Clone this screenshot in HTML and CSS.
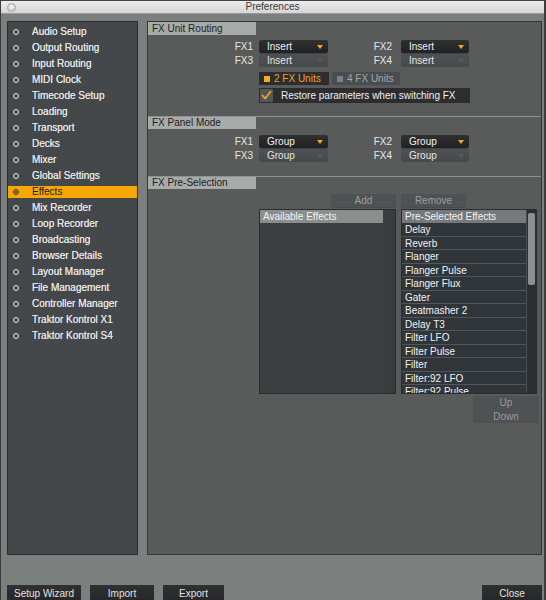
FILE: index.html
```html
<!DOCTYPE html>
<html>
<head>
<meta charset="utf-8">
<link rel="stylesheet" href="styles.css">
</head>
<body>
<div class="window">
  <div class="titlebar">
    <span class="dot"></span>
    <span class="title">Preferences</span>
  </div>
  <div class="main">
    <ul class="sidebar">
      <li class="item"><span class="bullet"></span>Audio Setup</li>
      <li class="item"><span class="bullet"></span>Output Routing</li>
      <li class="item"><span class="bullet"></span>Input Routing</li>
      <li class="item"><span class="bullet"></span>MIDI Clock</li>
      <li class="item"><span class="bullet"></span>Timecode Setup</li>
      <li class="item"><span class="bullet"></span>Loading</li>
      <li class="item"><span class="bullet"></span>Transport</li>
      <li class="item"><span class="bullet"></span>Decks</li>
      <li class="item"><span class="bullet"></span>Mixer</li>
      <li class="item"><span class="bullet"></span>Global Settings</li>
      <li class="item active"><span class="bullet"></span>Effects</li>
      <li class="item"><span class="bullet"></span>Mix Recorder</li>
      <li class="item"><span class="bullet"></span>Loop Recorder</li>
      <li class="item"><span class="bullet"></span>Broadcasting</li>
      <li class="item"><span class="bullet"></span>Browser Details</li>
      <li class="item"><span class="bullet"></span>Layout Manager</li>
      <li class="item"><span class="bullet"></span>File Management</li>
      <li class="item"><span class="bullet"></span>Controller Manager</li>
      <li class="item"><span class="bullet"></span>Traktor Kontrol X1</li>
      <li class="item"><span class="bullet"></span>Traktor Kontrol S4</li>
    </ul>
    <div class="panel">
      <section class="sec first">
        <div class="sec-head"><span class="tab">FX Unit Routing</span></div>
        <div class="fxgrid">
          <span class="lbl">FX1</span>
          <div class="dd"><span>Insert</span><span class="tri"></span></div>
          <span class="lbl lbl2">FX2</span>
          <div class="dd"><span>Insert</span><span class="tri"></span></div>
          <span class="lbl">FX3</span>
          <div class="dd off"><span>Insert</span><span class="tri"></span></div>
          <span class="lbl lbl2">FX4</span>
          <div class="dd off"><span>Insert</span><span class="tri"></span></div>
        </div>
        <div class="units">
          <div class="unit on"><span class="sq"></span>2 FX Units</div>
          <div class="unit off"><span class="sq"></span>4 FX Units</div>
        </div>
        <div class="restore">
          <span class="check">
            <svg width="13" height="13" viewBox="0 0 13 13"><path d="M2.5 6.5 L5.2 9.5 L10.5 2.8" fill="none" stroke="#f2a51c" stroke-width="1.8" stroke-linecap="round" stroke-linejoin="round"/></svg>
          </span>
          <span>Restore parameters when switching FX</span>
        </div>
      </section>
      <section class="sec second">
        <div class="sec-head"><span class="tab">FX Panel Mode</span></div>
        <div class="fxgrid">
          <span class="lbl">FX1</span>
          <div class="dd"><span>Group</span><span class="tri"></span></div>
          <span class="lbl lbl2">FX2</span>
          <div class="dd"><span>Group</span><span class="tri"></span></div>
          <span class="lbl">FX3</span>
          <div class="dd off"><span>Group</span><span class="tri"></span></div>
          <span class="lbl lbl2">FX4</span>
          <div class="dd off"><span>Group</span><span class="tri"></span></div>
        </div>
      </section>
      <section class="sec third">
        <div class="sec-head"><span class="tab">FX Pre-Selection</span></div>
        <div class="lists">
          <div class="listcol">
            <div class="btnrow right"><span class="gbtn add">Add</span></div>
            <div class="list">
              <div class="list-body">
                <div class="list-head">Available Effects</div>
              </div>
              <div class="scroll empty"></div>
            </div>
          </div>
          <div class="listcol">
            <div class="btnrow"><span class="gbtn remove">Remove</span></div>
            <div class="list">
              <div class="list-body">
                <div class="list-head pre">Pre-Selected Effects</div>
                <div class="row">Delay</div>
                <div class="row">Reverb</div>
                <div class="row">Flanger</div>
                <div class="row">Flanger Pulse</div>
                <div class="row">Flanger Flux</div>
                <div class="row">Gater</div>
                <div class="row">Beatmasher 2</div>
                <div class="row">Delay T3</div>
                <div class="row">Filter LFO</div>
                <div class="row">Filter Pulse</div>
                <div class="row">Filter</div>
                <div class="row">Filter:92 LFO</div>
                <div class="row">Filter:92 Pulse</div>
              </div>
              <div class="scroll"><span class="thumb"></span></div>
            </div>
          </div>
        </div>
        <div class="updown">
          <span class="gbtn ud">Up</span>
          <span class="gbtn ud">Down</span>
        </div>
      </section>
    </div>
  </div>
  <div class="footer">
    <div class="fgroup">
      <span class="fbtn wizard">Setup Wizard</span>
      <span class="fbtn import">Import</span>
      <span class="fbtn export">Export</span>
    </div>
    <span class="fbtn close">Close</span>
  </div>
</div>
</body>
</html>
```

FILE: styles.css
```css
* { box-sizing: border-box; }
html, body { margin: 0; padding: 0; }
body {
  width: 546px;
  height: 600px;
  overflow: hidden;
  font-family: "Liberation Sans", Arial, sans-serif;
  font-size: 10px;
  background: #7b807e;
}
.window {
  width: 546px;
  height: 600px;
  background: #7b807e;
  border-left: 1px solid #3a3c3c;
  border-right: 2px solid #3a3c3c;
  display: flex;
  flex-direction: column;
}
.titlebar {
  height: 14px;
  flex: none;
  background: linear-gradient(#ececec, #d6d6d6);
  border-top: 1px solid #444;
  border-bottom: 1px solid #9a9a9a;
  display: flex;
  align-items: center;
  justify-content: center;
  position: relative;
}
.dot {
  position: absolute;
  left: 6px;
  top: 2px;
  width: 9px;
  height: 9px;
  border-radius: 50%;
  background: radial-gradient(circle at 50% 40%, #f4f4f4, #c4c4c4);
  border: 1px solid #a4a4a4;
}
.title { color: #3a3a3a; font-size: 10px; line-height: 12px; }

.main {
  display: flex;
  padding: 7px 0 0 6px;
  gap: 9px;
  height: 541px;
  flex: none;
}
.sidebar {
  list-style: none;
  margin: 0;
  padding: 4px 0 0 0;
  width: 131px;
  height: 534px;
  background: #45484a;
  border: 1px solid #2a2c2c;
  display: flex;
  flex-direction: column;
  gap: 4px;
}
.item {
  height: 12px;
  display: flex;
  align-items: center;
  color: #e4e4e4;
  line-height: 12px;
  padding-left: 5px;
  white-space: nowrap;
  text-shadow: 0 0 0.4px #e4e4e4;
}
.bullet {
  width: 6px;
  height: 6px;
  border-radius: 50%;
  border: 1.6px solid #e8e8e8;
  margin-right: 13px;
  flex: none;
}
.item.active {
  background: #f6a800;
  color: #1c1c1c;
  text-shadow: none;
}
.item.active .bullet {
  border-color: #3a3018;
  background: radial-gradient(circle, #3a3018 0 1px, transparent 1.2px);
}

.panel {
  width: 395px;
  height: 534px;
  background: #595b5a;
  border: 1px solid #353737;
  display: flex;
  flex-direction: column;
}
.sec { display: flex; flex-direction: column; }
.sec-head { height: 13px; display: flex; }
.second, .third { border-top: 1px solid #8e9290; }
.second { margin-top: 13px; }
.third { margin-top: 14px; }
.tab {
  width: 108px;
  height: 13px;
  background: #a7acaa;
  color: #1e2020;
  padding-left: 4px;
  line-height: 13px;
  font-size: 10px;
}
.second .tab, .third .tab { height: 12px; line-height: 12px; }

.fxgrid {
  display: grid;
  grid-template-columns: 111px 69px 73px 68px;
  grid-auto-rows: 13px;
  row-gap: 1px;
  margin-top: 5px;
}
.lbl {
  text-align: right;
  padding-right: 6px;
  color: #e6e6e6;
  line-height: 13px;
}
.lbl2 { padding-right: 9px; }
.dd {
  height: 13px;
  background: linear-gradient(#2e3032, #1f2123);
  border-radius: 2px;
  color: #f2f2f2;
  display: flex;
  align-items: center;
  justify-content: space-between;
  padding: 0 5px 0 8px;
  box-shadow: 0 1px 0 rgba(0,0,0,0.25);
}
.tri {
  width: 0;
  height: 0;
  border-left: 3.5px solid transparent;
  border-right: 3.5px solid transparent;
  border-top: 4px solid #f2aa1e;
}
.dd.off {
  background: linear-gradient(#4e5153, #474a4c);
  color: #e4e4e4;
  box-shadow: none;
}
.dd.off .tri { border-top-color: #565a5c; }

.units {
  display: flex;
  gap: 3px;
  margin-top: 5px;
  padding-left: 111px;
}
.unit {
  height: 13px;
  display: flex;
  align-items: center;
  gap: 4px;
  padding-left: 5px;
}
.unit .sq { width: 6px; height: 6px; }
.unit.on { width: 70px; background: #2b2d2f; color: #f0a31e; }
.unit.on .sq { background: #f4ad1f; }
.unit.off { width: 68px; background: #4a4d4f; color: #a4a7a9; }
.unit.off .sq { background: #7c8082; }

.restore {
  margin: 3px 0 0 111px;
  width: 211px;
  height: 15px;
  background: #2b2d2f;
  display: flex;
  align-items: center;
  color: #f0f0f0;
  gap: 8px;
  padding-left: 1px;
}
.check {
  width: 13px;
  height: 13px;
  background: #53575a;
  display: flex;
}

.lists {
  display: flex;
  gap: 5px;
  margin-top: 4px;
  padding-left: 111px;
}
.listcol { display: flex; flex-direction: column; gap: 2px; width: 137px; }
.listcol:last-child { width: 136px; }
.btnrow { display: flex; height: 13px; }
.btnrow.right { justify-content: flex-end; }
.gbtn {
  height: 13px;
  background: #4f5253;
  color: #9a9d9e;
  display: flex;
  align-items: center;
  justify-content: center;
  box-shadow: 0 1px 0 rgba(0,0,0,0.15);
}
.add { width: 65px; }
.remove { width: 65px; }
.list {
  height: 185px;
  background: #3b3f41;
  border: 1px solid #2a2d2e;
  display: flex;
  overflow: hidden;
}
.list-body { flex: 1; overflow: hidden; }
.list-head {
  height: 13px;
  background: #8a8e8d;
  color: #f4f4f4;
  padding-left: 3px;
  line-height: 13px;
}
.list-head.pre { background: #74797b; }
.row {
  height: 13.5px;
  background: #30353a;
  border-bottom: 1px solid #50565a;
  color: #f2f2f2;
  padding-left: 3px;
  line-height: 13px;
  white-space: nowrap;
}
.scroll {
  width: 10px;
  flex: none;
  background: #2a2e30;
  border-left: 1px solid #4a4f52;
  padding: 3px 1px;
}
.scroll.empty { width: 12px; background: #383c3e; border-left: none; }
.thumb {
  display: block;
  height: 72px;
  background: #8b9092;
  border-radius: 2px;
}
.updown {
  display: flex;
  flex-direction: column;
  align-items: flex-end;
  margin-top: 2px;
  padding-right: 2px;
}
.ud { width: 66px; height: 13.5px; box-shadow: none; }

.footer {
  margin-top: 30px;
  display: flex;
  justify-content: space-between;
  padding: 0 2px 0 6px;
}
.fgroup { display: flex; gap: 9px; }
.fbtn {
  height: 18px;
  background: linear-gradient(#2e3032, #242628);
  color: #e2e2e2;
  display: flex;
  justify-content: center;
  padding-top: 3px;
  font-size: 10px;
}
.wizard { width: 74px; }
.import { width: 64px; }
.export { width: 61px; }
.close { width: 60px; }
```
